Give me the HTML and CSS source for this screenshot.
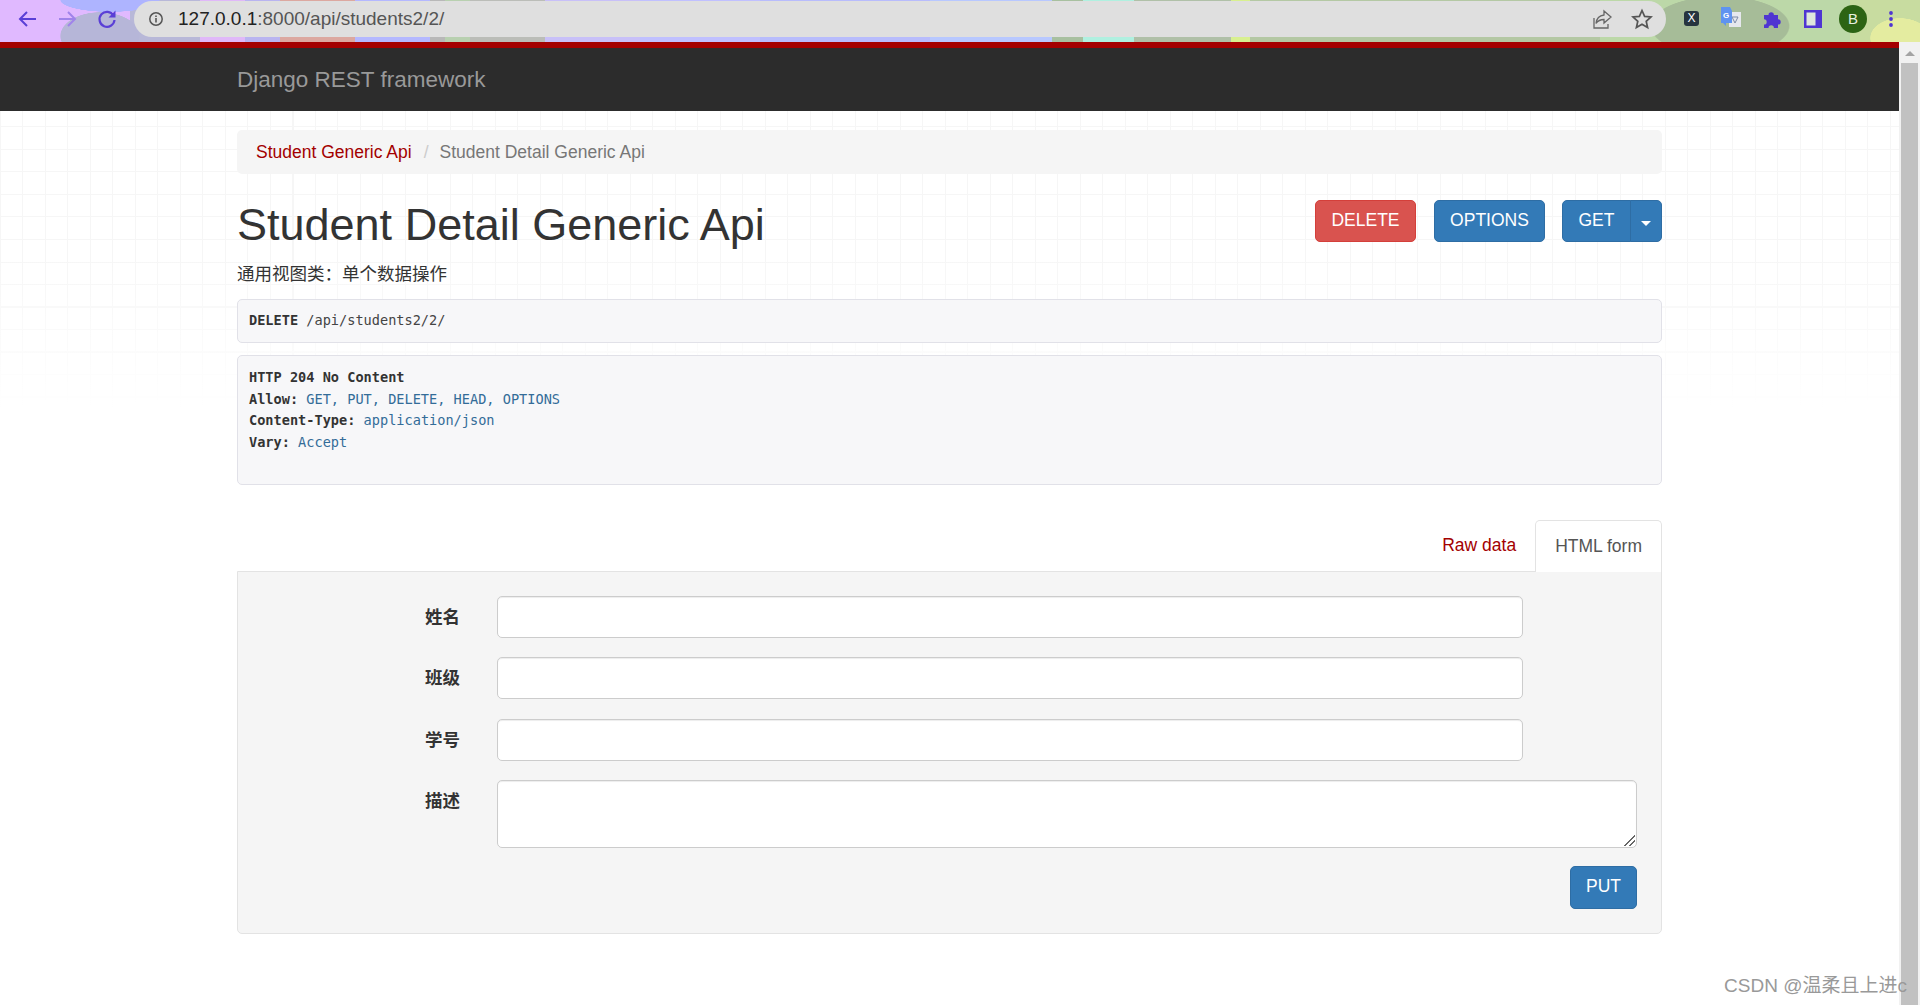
FILE: index.html
```html
<!doctype html>
<html>
<head>
<meta charset="utf-8">
<title>Student Detail Generic Api</title>
<link rel="stylesheet" href="styles.css">
</head>
<body>
<header class="chrome">
	<div class="nav-icons">
		<svg class="nav-icon" width="24" height="24" viewBox="0 0 24 24"><path d="M21 12H5M12 5l-7 7 7 7" fill="none" stroke="#5a3fd6" stroke-width="2"/></svg>
		<svg class="nav-icon" width="24" height="24" viewBox="0 0 24 24"><path d="M4 12h16M13 5l7 7-7 7" fill="none" stroke="#a083ea" stroke-width="2"/></svg>
		<svg class="nav-icon" width="24" height="24" viewBox="0 0 24 24"><path d="M18.500 8.500A7.500 7.500 0 1 0 19.500 13" fill="none" stroke="#5a3fd6" stroke-width="2.200"/><path d="M20.500 3.500v7h-7z" fill="#5a3fd6"/></svg>
	</div>
	<div class="omnibox">
		<svg width="16" height="16" viewBox="0 0 16 16"><circle cx="8" cy="8" r="6.200" fill="none" stroke="#555" stroke-width="1.500"/><path d="M8 7v4.500M8 4.400v1.500" stroke="#555" stroke-width="1.600"/></svg>
		<span class="url"><b>127.0.0.1</b>:8000/api/students2/2/</span>
		<span class="omni-right">
			<svg width="22" height="22" viewBox="0 0 22 22"><path d="M3 10v10h14v-4" fill="none" stroke="#666" stroke-width="1.300"/><path d="M13 3l7 6-7 6v-3.500c-3.500 0-6 1-8 4 .5-4.500 3.500-8 8-8.500z" fill="none" stroke="#666" stroke-width="1.300"/></svg>
			<svg width="22" height="22" viewBox="0 0 22 22"><path d="M11 2.500l2.600 5.900 6.400.6-4.800 4.300 1.400 6.300-5.600-3.300-5.600 3.300 1.400-6.300L2 9l6.400-.6z" fill="none" stroke="#555" stroke-width="1.700"/></svg>
		</span>
	</div>
	<div class="ext-icons">
		<span class="ext-x">X</span>
		<svg width="22" height="24" viewBox="0 0 22 24"><rect x="9" y="5" width="12" height="15" fill="#e6e8ee"/><path d="M12 10l3 6 3-6z" fill="none" stroke="#7d8aa8"/><path d="M1 0h9l2 4v12H6v3l-3-3H1z" fill="#5f93f0"/><text x="3" y="11" class="ext-g">G</text></svg>
		<svg width="20" height="20" viewBox="0 0 20 20"><path d="M1 6h4.500a2.700 2.700 0 1 1 5.400 0H15v4.200a2.700 2.700 0 1 1 0 5.400V19h-4.100a2.700 2.700 0 1 0-5.400 0H1v-3.400a2.700 2.700 0 1 0 0-5.400z" fill="#4f35d2"/></svg>
		<svg width="18" height="18" viewBox="0 0 18 18"><rect width="18" height="18" fill="#4f35d2"/><rect x="2.500" y="2.500" width="9" height="13" fill="#dfe6dc"/></svg>
		<span class="avatar">B</span>
		<svg width="6" height="20" viewBox="0 0 6 20"><circle cx="3" cy="4" r="1.900" fill="#4f35d2"/><circle cx="3" cy="10" r="1.900" fill="#4f35d2"/><circle cx="3" cy="16" r="1.900" fill="#4f35d2"/></svg>
	</div>
</header>
<div class="viewport">
	<div class="page">
		<div class="navbar"><div class="container"><span class="brand">Django REST framework</span></div></div>
		<div class="container content">
			<ul class="breadcrumb">
				<li><a href="#">Student Generic Api</a></li>
				<li class="sep">/</li>
				<li class="current">Student Detail Generic Api</li>
			</ul>
			<div class="title-row">
				<h1>Student Detail Generic Api</h1>
				<div class="actions">
					<button class="btn btn-danger">DELETE</button>
					<button class="btn btn-primary btn-options">OPTIONS</button>
					<div class="btn-group">
						<button class="btn btn-primary btn-main">GET</button>
						<button class="btn btn-primary btn-caret"><span class="caret"></span></button>
					</div>
				</div>
			</div>
			<p class="desc">通用视图类：单个数据操作</p>
			<pre class="code request"><b>DELETE</b> <a href="#">/api/students2/2/</a></pre>
			<pre class="code response"><b>HTTP 204 No Content</b>
<b>Allow:</b> <i>GET, PUT, DELETE, HEAD, OPTIONS</i>
<b>Content-Type:</b> <i>application/json</i>
<b>Vary:</b> <i>Accept</i>
</pre>
			<ul class="tabs">
				<li><a href="#">Raw data</a></li>
				<li class="active"><a href="#">HTML form</a></li>
			</ul>
			<form class="well">
				<div class="field"><label>姓名</label><input class="input" type="text"></div>
				<div class="field"><label>班级</label><input class="input" type="text"></div>
				<div class="field"><label>学号</label><input class="input" type="text"></div>
				<div class="field field-text"><label>描述</label><textarea class="textarea"></textarea></div>
				<div class="form-actions"><button class="btn btn-primary btn-put" type="button">PUT</button></div>
			</form>
		</div>
	</div>
	<div class="scrollbar">
		<span class="scroll-up"></span>
		<span class="scroll-thumb"></span>
	</div>
	<div class="watermark">CSDN @温柔且上进c</div>
</div>
</body>
</html>
```
FILE: styles.css
```css
html, body {
	margin: 0;
	padding: 0;
	height: 1005px;
	overflow: hidden;
}
body {
	font-family: "Liberation Sans", "Noto Sans CJK SC", sans-serif;
	font-size: 17.500px;
	color: #333;
	background: #fff;
}
a {
	text-decoration: none;
}
.chrome {
	height: 42px;
	display: flex;
	align-items: center;
	background:
		radial-gradient(ellipse 50px 12px at 110px 0, #aeb4ff 98%, #aeb4ff00),
		radial-gradient(ellipse 40px 24px at 100px 36px, #b6b6d8 98%, #b6b6d800),
		radial-gradient(ellipse 70px 30px at 1720px 26px, #a6bc98 98%, #a6bc9800),
		radial-gradient(ellipse 30px 20px at 1900px 38px, #e4eca0 98%, #e4eca000),
		linear-gradient(90deg, #e0b9ff 0 130px, #b8b8d8 130px 200px, #e0b8f8 200px 245px, #b9b4f0 245px 280px, #dca8a0 280px 355px, #b4b8ff 355px 430px, #b8b8b8 430px 445px, #b8d0b0 445px 470px, #bbbdb8 470px 545px, #c8c0f8 545px 640px, #c0c0ff 640px 760px, #b8bcfc 760px 930px, #b8c8ff 930px 1052px, #a8c0a0 1052px 1083px, #b0f0e0 1083px 1134px, #b0c0a8 1134px 1231px, #d8f090 1231px 1250px, #b4c8a4 1250px 1600px, #bcd8a8 1600px 1850px, #c8dca0 1850px);
}
.nav-icons {
	display: flex;
	gap: 16px;
	padding-left: 15px;
	width: 120px;
	box-sizing: border-box;
	margin-top: -5px;
}
.omnibox {
	width: 1532px;
	height: 36px;
	margin-left: 14px;
	margin-top: -5px;
	border-radius: 18px;
	background: #dfdfdf;
	display: flex;
	align-items: center;
	padding: 0 12px 0 14px;
	box-sizing: border-box;
	gap: 14px;
}
.url {
	font-size: 19px;
	color: #555;
}
.url b {
	font-weight: normal;
	color: #222;
}
.omni-right {
	margin-left: auto;
	display: flex;
	gap: 18px;
	padding-right: 1px;
}
.ext-icons {
	display: flex;
	align-items: center;
	gap: 21px;
	margin-left: 18px;
	margin-top: -5px;
}
.ext-x {
	width: 15px;
	height: 15px;
	border-radius: 3px;
	background: #26343f;
	color: #fff;
	font-size: 12px;
	line-height: 15px;
	text-align: center;
}
.ext-g {
	font-size: 8px;
	font-weight: bold;
	fill: #fff;
}
.avatar {
	width: 28px;
	height: 28px;
	margin-left: -4px;
	border-radius: 50%;
	background: #2d6414;
	color: #e8f0e0;
	font-size: 15px;
	line-height: 28px;
	text-align: center;
}
.viewport {
	position: relative;
	display: flex;
	height: 963px;
}
.page {
	flex: 1;
	min-width: 0;
	background:
		linear-gradient(#fff0 0, #fff0 22%, #fff 38%),
		repeating-linear-gradient(90deg, #f6f6f6 0 1px, #fff0 1px 22.500px),
		repeating-linear-gradient(0deg, #f6f6f6 0 1px, #fff0 1px 22.500px);
}
.container {
	width: 1425px;
	margin: 0 auto;
}
.navbar {
	height: 63px;
	background: #2c2c2c;
	border-top: 6px solid #a30000;
}
.brand {
	display: block;
	font-size: 22.500px;
	line-height: 63px;
	color: #999;
}
.content {
	padding-top: 19px;
}
.breadcrumb {
	display: flex;
	gap: 11px;
	height: 44px;
	align-items: center;
	list-style: none;
	margin: 0;
	padding: 0 19px;
	background: #f5f5f5;
	border-radius: 5px;
}
.breadcrumb a {
	color: #a30000;
}
.sep {
	color: #ccc;
	padding: 0 0 0 1px;
}
.current {
	color: #777;
}
.title-row {
	display: flex;
	justify-content: space-between;
	padding-top: 26px;
}
h1 {
	margin: 0;
	font-size: 45px;
	font-weight: normal;
	line-height: 50px;
	color: #333;
}
.actions {
	display: flex;
}
.btn {
	height: 42px;
	padding: 0 0 2px;
	border: 1px solid transparent;
	border-radius: 5px;
	font-family: inherit;
	font-size: 17.500px;
	color: #fff;
}
.btn-danger {
	width: 101px;
	margin-right: 18px;
	background: #d9534f;
	border-color: #d43f3a;
}
.btn-primary {
	background: #337ab7;
	border-color: #2e6da4;
}
.btn-options {
	width: 111px;
	margin-right: 17px;
}
.btn-group {
	display: flex;
}
.btn-main {
	width: 69px;
	border-radius: 5px 0 0 5px;
}
.btn-caret {
	width: 32px;
	border-radius: 0 5px 5px 0;
	margin-left: -1px;
}
.caret {
	display: inline-block;
	border-top: 5px solid #fff;
	border-left: 5px solid transparent;
	border-right: 5px solid transparent;
}
.desc {
	margin: 12px 0 0;
	padding-bottom: 1px;
	line-height: 24px;
}
.code {
	margin: 0;
	padding: 10px 10px 10px 11px;
	font-family: "DejaVu Sans Mono", monospace;
	font-size: 13.600px;
	line-height: 21.500px;
	background: #f7f7f9;
	border: 1px solid #e1e1e8;
	border-radius: 5px;
	color: #333;
}
.code a {
	color: #444;
}
.code i {
	color: #336c98;
	font-style: normal;
}
.request {
	margin-top: 12px;
	height: 44px;
	box-sizing: border-box;
}
.response {
	margin-top: 12px;
	height: 130px;
	padding-top: 11px;
	box-sizing: border-box;
}
.tabs {
	display: flex;
	justify-content: flex-end;
	list-style: none;
	margin: 35px 0 0;
	padding: 0;
}
.tabs li {
	height: 51px;
}
.tabs a {
	display: block;
	padding: 0 19px;
	line-height: 51px;
	color: #a30000;
}
.tabs .active {
	background: #fff;
	border: 1px solid #e3e3e3;
	border-bottom: 0;
	border-radius: 5px 5px 0 0;
	position: relative;
	z-index: 1;
}
.tabs .active a {
	color: #555;
}
.well {
	margin-top: -1px;
	height: 363px;
	box-sizing: border-box;
	padding: 24px 24px 0 0;
	background: #f5f5f5;
	border: 1px solid #e3e3e3;
	border-radius: 0 0 5px 5px;
}
.field {
	display: flex;
	margin-bottom: 19.300px;
}
.field label {
	width: 259px;
	height: 42px;
	flex: none;
	text-align: right;
	font-weight: bold;
	line-height: 43px;
	padding-right: 37px;
	box-sizing: border-box;
}
.input {
	width: 1026px;
	height: 42px;
	box-sizing: border-box;
	background: #fff;
	border: 1px solid #ccc;
	border-radius: 5px;
	box-shadow: inset 0 1px 1px rgba(0, 0, 0, .075);
}
.textarea {
	flex: 1;
	height: 68px;
	box-sizing: border-box;
	background: #fff;
	border: 1px solid #ccc;
	border-radius: 5px;
	box-shadow: inset 0 1px 1px rgba(0, 0, 0, .075);
}
.textarea::-webkit-resizer {
	background: linear-gradient(135deg, #fff0 48%, #666 48% 56%, #fff0 56% 72%, #666 72% 80%, #fff0 80%) no-repeat right 1px bottom 1px / 11px 11px;
}
.form-actions {
	display: flex;
	justify-content: flex-end;
	margin-top: -1px;
}
.btn-put {
	width: 67px;
	height: 43px;
}
.scrollbar {
	width: 21px;
	flex: none;
	background: #f1f1f1;
	display: flex;
	flex-direction: column;
	align-items: center;
}
.scroll-up {
	margin-top: 9px;
	border-bottom: 5px solid #a3a3a3;
	border-left: 5px solid transparent;
	border-right: 5px solid transparent;
}
.scroll-thumb {
	margin-top: 7px;
	width: 17px;
	flex: 1;
	background: #c1c1c1;
}
.watermark {
	position: absolute;
	right: 13px;
	bottom: 8px;
	font-size: 19px;
	color: #999;
}
```
